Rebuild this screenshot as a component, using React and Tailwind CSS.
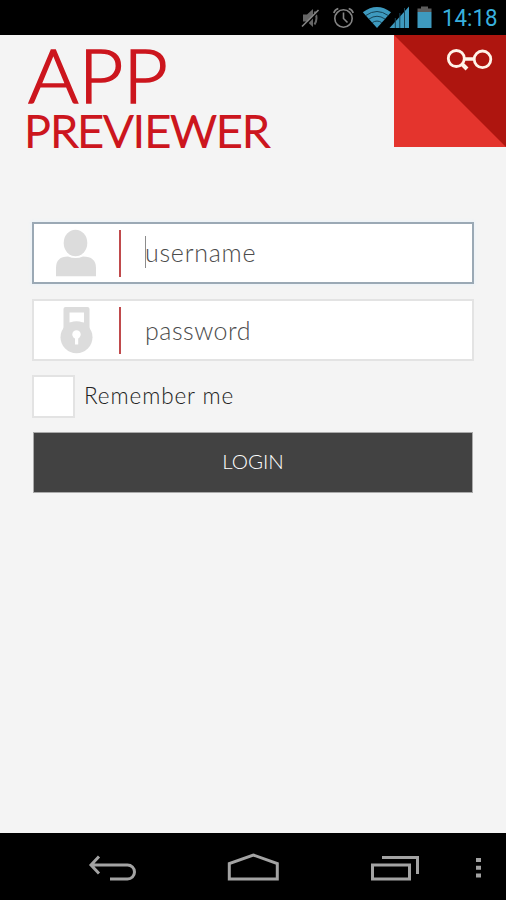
const iconGray = "#a3a3a3";

function StatusBar() {
  return (
    <header className="flex h-[35px] w-full justify-end bg-black">
      <svg width="216" height="35" viewBox="290 0 216 35" aria-hidden="true">
        <g fill="#666">
          <path d="M303 14.500h4l6-5.500v18l-6-5.500h-4z" />
          <path d="M314.500 11.500q4 6.500 0 13" fill="none" stroke="#666" strokeWidth="2" />
        </g>
        <path d="M303.500 27.500L319 11" stroke="#000" strokeWidth="1.500" />
        <path d="M302 26.500L318.500 10" stroke="#858585" strokeWidth="1.600" />
        <g fill="none" stroke="#858585" strokeWidth="1.600">
          <circle cx="343.500" cy="18.500" r="8.700" />
          <path d="M343.500 12.500v6l4 4M333.800 13q1-3.500 4.500-4.500M353.200 13q-1-3.500-4.500-4.500" />
        </g>
        <path d="M362.800 12.300Q377 1.800 391 12.300L377 28z" fill="#3e9abf" />
        <g fill="none" stroke="#164356" strokeWidth="1">
          <path d="M365.800 15.500Q377 7.500 388.200 15.500" />
          <path d="M369 19Q377 13.500 385 19" />
          <path d="M372.300 22.600Q377 19.500 381.700 22.600" />
        </g>
        <path d="M389.500 28L409 6.500V28z" fill="#3e9abf" />
        <path d="M395.300 18v10M399.800 13v15M404.500 8v20" stroke="#164356" strokeWidth="1" />
        <path d="M417.500 8.500h3.500V6.500h7v2h3.500V12h-14z" fill="#5c5c5c" />
        <path d="M417.500 12h14v16h-14z" fill="#3e9abf" />
        <text x="442" y="26" fontFamily="Roboto, sans-serif" fontSize="23" fontWeight="400" fill="#38b0de" textLength="55.500" lengthAdjust="spacingAndGlyphs">14:18</text>
      </svg>
    </header>
  );
}

function Brand() {
  return (
    <svg className="overflow-visible" width="260" height="118" viewBox="20 35 260 118" fontFamily="Lato, sans-serif" fill="#cc161e">
      <text x="28" y="103" fontSize="74.500" fontWeight="300" stroke="#cc161e" strokeWidth="1.500" textLength="140" lengthAdjust="spacingAndGlyphs">APP</text>
      <text x="24.500" y="147" fontSize="42.500" fontWeight="300" stroke="#cc161e" strokeWidth="2" textLength="245" lengthAdjust="spacingAndGlyphs">PREVIEWER</text>
    </svg>
  );
}

function Corner() {
  return (
    <svg width="112" height="112" viewBox="0 0 112 112" aria-hidden="true">
      <path d="M0 0h112v112H0z" fill="#e4342d" />
      <path d="M0 0h112v112z" fill="#ae150f" />
      <g fill="none" stroke="#fff3e8" strokeWidth="2.800">
        <circle cx="62.300" cy="23.500" r="8" />
        <circle cx="88.500" cy="24.300" r="8.300" />
        <path d="M71 24h9" strokeWidth="3.500" />
        <path d="M67.500 28.500l5.500 5.500" strokeWidth="4" />
      </g>
    </svg>
  );
}

function UserIcon() {
  return (
    <svg width="42" height="48" viewBox="55 229 42 48" fill="#dcdcdc" aria-hidden="true">
      <ellipse cx="75.500" cy="243" rx="11.800" ry="13.300" />
      <path d="M56 276.300V268q0-11.500 12-11.500 7.500 3 15 0 13 0 13 11.500v8.300z" />
    </svg>
  );
}

function LockIcon() {
  return (
    <svg width="42" height="48" viewBox="55 307 42 48" fill="#dcdcdc" aria-hidden="true">
      <path fillRule="evenodd" d="M65.500 308H87.500q2 0 2 2v20h-26v-20q0-2 2-2zM69.500 313.500v10h14.500v-10z" />
      <circle cx="76.500" cy="338.300" r="16" />
      <circle cx="76.500" cy="335.500" r="4.200" fill="#fff" />
      <path d="M75 336h3.200v9.500H75z" fill="#fff" />
    </svg>
  );
}

function Field({ icon, label, focused }) {
  return (
    <div className={focused
      ? "flex h-[62px] items-center border-2 border-[#9ba9b5] bg-white shadow-[0_0_3px_1px_#eaf2f8]"
      : "flex h-[62px] items-center border-2 border-[#e3e3e3] bg-white"}>
      <div className="ml-[21px] w-[64px]">{icon}</div>
      <div className="h-[47px] w-[2px] bg-[#c04a4c]" />
      {focused ? <div className="mb-[3px] ml-6 h-8 w-px bg-[#8c8c8c]" /> : <div className="ml-6 w-px" />}
      <span className={focused
        ? "-ml-px pb-[3px] text-[25px] leading-[30px] font-light tracking-[0.75px] text-[#4c4c4c]"
        : "-ml-px text-[25px] leading-[30px] font-light tracking-[0.5px] text-[#4c4c4c]"}>{label}</span>
    </div>
  );
}

function NavigationBar() {
  return (
    <nav className="h-[67px] w-full bg-black">
      <svg width="506" height="67" viewBox="0 833 506 67" fill="none" stroke={iconGray} strokeWidth="3">
        <path d="M99 856.500L91 865l8 8.500M91 865h36.500a7 7 0 0 1 0 14H110" />
        <path d="M229.300 879V863.500l24-8.500 24 8.500V879z" />
        <path d="M372.500 865h37v14h-37zM382 857.500h35.500V874" />
        <path d="M476 858h5v4h-5zM476 865.700h5v4h-5zM476 873.500h5v4h-5z" fill={iconGray} stroke="none" />
      </svg>
    </nav>
  );
}

export default function App() {
  return (
    <div className="flex h-[900px] w-[506px] flex-col overflow-hidden bg-[#f4f4f4] font-['Lato',sans-serif]">
      <StatusBar />
      <div className="flex h-[187px] items-start justify-between pl-5">
        <Brand />
        <Corner />
      </div>
      <main className="flex flex-1 flex-col pr-8 pl-8">
        <Field icon={<UserIcon />} label="username" focused />
        <div className="h-[15px]" />
        <Field icon={<LockIcon />} label="password" />
        <div className="mt-[14px] flex h-[43px] items-center">
          <div className="h-[43px] w-[43px] border-2 border-[#e3e3e3] bg-white" />
          <span className="ml-[9px] pb-0.5 text-[22.5px] leading-7 font-light tracking-[0.9px] text-[#222]">Remember me</span>
        </div>
        <button className="mx-px mt-[14px] h-[61px] w-[440px] border border-[#aaa] bg-[#424242] pb-[3px] text-[20.5px] font-light text-white">LOGIN</button>
      </main>
      <NavigationBar />
    </div>
  );
}
